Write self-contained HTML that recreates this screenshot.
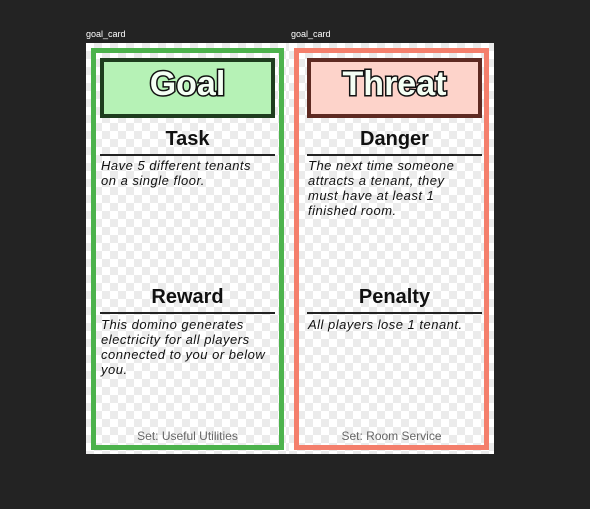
<!DOCTYPE html><html><head><style>
body{margin:0;width:590px;height:509px;background:#232323;position:relative;overflow:hidden;font-family:"Liberation Sans",sans-serif}
.lbl{position:absolute;top:29px;color:#fff;font-size:9px}
.card{position:absolute;top:43px;height:411px;background-color:#fff;background-image:repeating-conic-gradient(#ebebeb 0 25%,#fff 0 50%);background-size:16px 16px}
.bd{position:absolute;left:5px;top:5px;right:5px;bottom:4px;border:5px solid}
.hd{position:absolute;top:15px;height:52px;border:4px solid;left:14px;width:167px}
.big{position:absolute;left:0;right:0;top:3px;text-align:center;font-size:34px;font-weight:bold;color:#f4fff4;-webkit-text-stroke:3px #111;paint-order:stroke fill}
.t{position:absolute;left:14px;width:175px;text-align:center;font-size:20px;font-weight:bold;color:#111}
.ln{position:absolute;left:14px;width:175px;height:2px;background:#222}
.p{position:absolute;left:15px;width:185px;font-size:13px;font-style:italic;line-height:15px;color:#111;letter-spacing:0.5px;white-space:nowrap}
.s{position:absolute;left:0;right:0;top:386px;text-align:center;font-size:12px;color:#666}
</style></head><body>
<div class="lbl" style="left:86px">goal_card</div>
<div class="lbl" style="left:291px">goal_card</div>
<div class="card" style="left:86px;width:203px">
 <div class="bd" style="border-color:#4cb24c"></div>
 <div class="hd" style="background:#b6f2b6;border-color:#1e3d1e"><div class="big">Goal</div></div>
 <div class="t" style="top:85px">Task</div><div class="ln" style="top:111px"></div>
 <div class="p" style="top:115px">Have 5 different tenants<br>on a single floor.</div>
 <div class="t" style="top:243px">Reward</div><div class="ln" style="top:269px"></div>
 <div class="p" style="top:274px">This domino generates<br>electricity for all players<br>connected to you or below<br>you.</div>
 <div class="s">Set: Useful Utilities</div>
</div>
<div class="card" style="left:289px;width:205px">
 <div class="bd" style="border-color:#f47f6c"></div>
 <div class="hd" style="left:18px;background:#fdd3ca;border-color:#5e2a22"><div class="big">Threat</div></div>
 <div class="t" style="left:18px;top:85px">Danger</div><div class="ln" style="left:18px;top:111px"></div>
 <div class="p" style="left:19px;top:115px">The next time someone<br>attracts a tenant, they<br>must have at least 1<br>finished room.</div>
 <div class="t" style="left:18px;top:243px">Penalty</div><div class="ln" style="left:18px;top:269px"></div>
 <div class="p" style="left:19px;top:274px">All players lose 1 tenant.</div>
 <div class="s">Set: Room Service</div>
</div>
</body></html>
